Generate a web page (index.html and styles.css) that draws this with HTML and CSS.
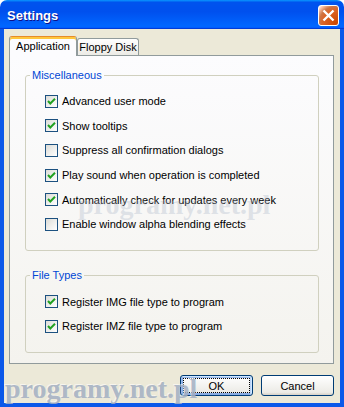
FILE: index.html
```html
<!DOCTYPE html>
<html lang="en">
<head>
  <meta charset="UTF-8">
  <title>Settings</title>
  <link rel="stylesheet" href="styles.css">
</head>
<body>
  <div class="window">
    <div class="title-bar">
      <span class="title">Settings</span>
      <button class="close" aria-label="Close">
        <svg width="13" height="13" viewBox="0 0 13 13"><path d="M1.5 1.5 L11.5 11.5 M11.5 1.5 L1.5 11.5" stroke="#fff" stroke-width="2.4" fill="none"/></svg>
      </button>
    </div>
    <div class="window-body">
      <div class="tabs">
        <div class="tab active">Application</div>
        <div class="tab">Floppy Disk</div>
      </div>
      <div class="panel">
        <fieldset class="group group-misc">
          <legend>Miscellaneous</legend>
          <div class="rows">
            <label class="row"><span class="check on"><svg width="9" height="9" viewBox="0 0 9 9"><path d="M1 4 L3.3 6.5 L8 1.8" stroke="#21a121" stroke-width="2" fill="none"/></svg></span>Advanced user mode</label>
            <label class="row"><span class="check on"><svg width="9" height="9" viewBox="0 0 9 9"><path d="M1 4 L3.3 6.5 L8 1.8" stroke="#21a121" stroke-width="2" fill="none"/></svg></span>Show tooltips</label>
            <label class="row"><span class="check"></span>Suppress all confirmation dialogs</label>
            <label class="row"><span class="check on"><svg width="9" height="9" viewBox="0 0 9 9"><path d="M1 4 L3.3 6.5 L8 1.8" stroke="#21a121" stroke-width="2" fill="none"/></svg></span>Play sound when operation is completed</label>
            <label class="row"><span class="check on"><svg width="9" height="9" viewBox="0 0 9 9"><path d="M1 4 L3.3 6.5 L8 1.8" stroke="#21a121" stroke-width="2" fill="none"/></svg></span>Automatically check for updates every week</label>
            <label class="row"><span class="check"></span>Enable window alpha blending effects</label>
          </div>
        </fieldset>
        <fieldset class="group group-types">
          <legend>File Types</legend>
          <div class="rows">
            <label class="row"><span class="check on"><svg width="9" height="9" viewBox="0 0 9 9"><path d="M1 4 L3.3 6.5 L8 1.8" stroke="#21a121" stroke-width="2" fill="none"/></svg></span>Register IMG file type to program</label>
            <label class="row"><span class="check on"><svg width="9" height="9" viewBox="0 0 9 9"><path d="M1 4 L3.3 6.5 L8 1.8" stroke="#21a121" stroke-width="2" fill="none"/></svg></span>Register IMZ file type to program</label>
          </div>
        </fieldset>
      </div>
      <div class="buttons">
        <button class="btn default">OK</button>
        <button class="btn">Cancel</button>
      </div>
    </div>
    <div class="watermark wm-mid">programy.net.pl</div>
    <div class="watermark wm-bottom">programy.net.pl</div>
  </div>
</body>
</html>
```

FILE: styles.css
```css
*{
  margin: 0;
  padding: 0;
  box-sizing: border-box;
}
body{
  background: #fff;
  font-family: "Liberation Sans", Arial, sans-serif;
  font-size: 11px;
  color: #000;
}
.window{
  position: relative;
  width: 344px;
  height: 407px;
  display: flex;
  flex-direction: column;
  border-radius: 7px 7px 0 0;
  overflow: hidden;
}
.title-bar{
  height: 29px;
  display: flex;
  align-items: center;
  justify-content: space-between;
  padding: 2px 5px 0 7px;
  background: linear-gradient(180deg, #0997ff, #0053ee 8%, #0050ee 40%, #06f 88%, #06f 93%, #005bff 95%, #003dd7 96%, #003dd7);
}
.title{
  color: #fff;
  font-weight: bold;
  font-size: 13px;
  text-shadow: 1px 1px #0f1089;
}
.close{
  width: 21px;
  height: 21px;
  border: 1px solid #fff;
  border-radius: 3px;
  display: flex;
  align-items: center;
  justify-content: center;
  background: radial-gradient(circle at 90% 90%, #cc4600 0%, #dc6527 55%, #cd7546 70%, #ffccb2 90%, #fff 100%);
}
.window-body{
  flex: 1;
  display: flex;
  flex-direction: column;
  background: #ece9d8;
  border: 4px solid #0b58e9;
  border-top: 0;
  padding: 7px 6px 7px 5px;
}
.tabs{
  height: 19px;
  display: flex;
  align-items: flex-end;
}
.tab{
  height: 17px;
  width: 62px;
  display: flex;
  align-items: center;
  justify-content: center;
  border: 1px solid #919b9c;
  border-bottom: 0;
  border-radius: 3px 3px 0 0;
  background: linear-gradient(180deg, #fff, #ecebe6);
}
.tab.active{
  position: relative;
  z-index: 1;
  height: 20px;
  width: 68px;
  margin-bottom: -1px;
  padding-bottom: 1px;
  border-top: 1px solid #e68b2c;
  box-shadow: inset 0 2px #ffc73c;
  background: #fcfcfe;
}
.panel{
  height: 309px;
  display: flex;
  flex-direction: column;
  border: 1px solid #919b9c;
  background: linear-gradient(180deg, #fcfcfe, #f4f3ee);
  padding: 0 14px 0 15px;
}
.group{
  border: 1px solid #d0d0bf;
  border-radius: 3px;
  padding: 0 0 13px 4px;
}
.group legend{
  line-height: 13px;
  padding: 0 2px;
  color: #0046d5;
}
.group-misc{
  margin-top: 13px;
}
.group-types{
  margin-top: 18px;
}
.rows{
  padding: 7px 0 0 15px;
}
.group-types .rows{
  padding-top: 8px;
}
.row{
  height: 24.6px;
  display: flex;
  align-items: center;
}
.check{
  width: 13px;
  height: 13px;
  margin-right: 4px;
  border: 1px solid #1c5180;
  background: linear-gradient(135deg, #dcdcd7, #fff);
  display: flex;
  align-items: center;
  justify-content: center;
}
.buttons{
  margin-top: 11px;
  display: flex;
  justify-content: flex-end;
  gap: 8px;
}
.btn{
  width: 73px;
  height: 21px;
  font-family: "Liberation Sans", Arial, sans-serif;
  font-size: 11px;
  color: #000;
  border: 1px solid #003c74;
  border-radius: 3px;
  background: linear-gradient(180deg, #fff, #ecebe6 86%, #d6d0c5);
}
.btn.default{
  box-shadow: inset -1px 1px #cee7ff, inset 1px 2px #98b8ea, inset -2px 2px #bcd4f6, inset 1px -1px #89ade4, inset 2px -2px #89ade4;
  outline: 1px dotted #000;
  outline-offset: -4px;
}
.watermark{
  position: absolute;
  font-family: "Liberation Serif", "Times New Roman", serif;
  font-weight: bold;
  font-size: 28px;
  line-height: 28px;
  color: #a4b0c4;
  text-shadow: -1px -1px rgba(255, 255, 255, 0.7);
  pointer-events: none;
}
.wm-mid{
  left: 78px;
  top: 191px;
  opacity: 0.3;
}
.wm-bottom{
  left: 5px;
  top: 375px;
  opacity: 0.85;
}
```
